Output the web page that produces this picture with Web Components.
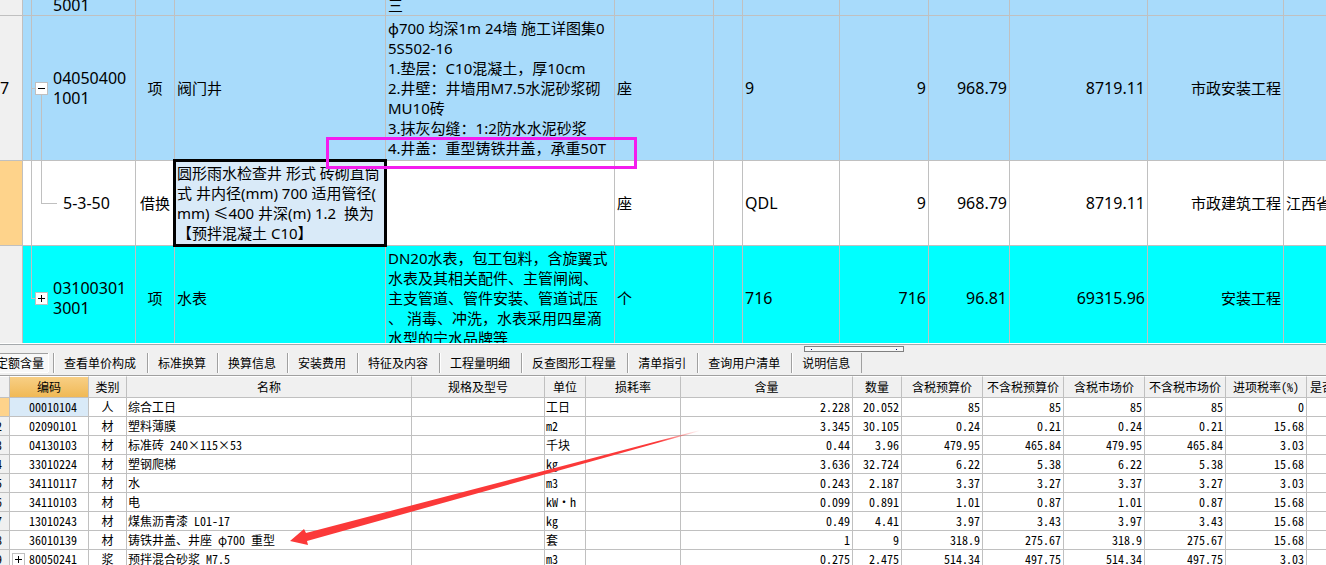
<!DOCTYPE html>
<html lang="zh-CN">
<head>
<meta charset="utf-8">
<title>工程量清单</title>
<style>
  html, body { margin: 0; height: 100%; overflow: hidden; background: #fff; }
</style>
</head>
<body>
<budget-app>
  <bill-sheet slot="bill"></bill-sheet>
  <detail-tabs slot="tabs"></detail-tabs>
  <resource-sheet slot="detail"></resource-sheet>
</budget-app>

<script>
const define = (name, html, setup) => {
  const template = document.createElement('template');
  template.innerHTML = html;
  customElements.define(name, class extends HTMLElement {
    constructor() {
      super();
      this.attachShadow({ mode: 'open' }).append(template.content.cloneNode(true));
    }
    connectedCallback() {
      if (setup && !this.ready) { this.ready = true; setup(this, this.shadowRoot); }
    }
  });
};

// Two stacked panes with the tab strip between them.
define('budget-app', `
<style>
  :host {
    display: grid;
    grid-template-rows: minmax(0, 49fr) auto minmax(0, 27fr);
    height: 100vh;
    color: #000;
    background: #fff;
  }
  ::slotted(*) { min-width: 0; }
</style>
<slot name="bill"></slot><slot name="tabs"></slot><slot name="detail"></slot>`);

// Plus / minus box of a tree row.
define('tree-toggle', `
<style>
  :host { display: block; flex: none; width: 13px; height: 13px; white-space: normal; }
  button {
    display: block; width: 13px; height: 13px; padding: 0; box-sizing: border-box;
    border: 1px solid #c0c0c0; border-radius: 0; background: #fff;
  }
  svg { display: block; }
  :host([open]) .v { display: none; }
</style>
<button type="button" aria-label="+/-">
  <svg width="11" height="11" viewBox="0 0 11 11" shape-rendering="crispEdges">
    <path d="M2 5h7v1H2z"/><path class="v" d="M5 2h1v7H5z"/>
  </svg>
</button>`);

// Frame that marks a passage of the bill.
define('mark-frame', `
<style>
  :host { display: block; box-sizing: border-box; border: 3px solid #f41cee; pointer-events: none; }
</style>`);

// Tapering arrow that fades at its tail.
define('mark-arrow', `
<style>:host { display: block; pointer-events: none; } svg { display: block; }</style>
<svg width="414" height="120" viewBox="0 0 414 120" aria-hidden="true">
  <defs>
    <linearGradient id="g" gradientUnits="userSpaceOnUse" x1="0" y1="0" x2="412" y2="0">
      <stop offset="0.9" stop-color="#fb3939"/>
      <stop offset="1" stop-color="#fb3939" stop-opacity="0"/>
    </linearGradient>
  </defs>
  <path fill="url(#g)" d="M2 112 L16 100 L18 104 L412 1 L412 2 L19 112 L20 116 Z"/>
</svg>`);

const billRows = [
  { kind: 'item last', no: '', tree: 'none', code: ['5001'], type: '', name: [], desc: ['三'], unit: '', expr: '', qty: '', price: '', total: '', spec: '', lib: '' },
  { kind: 'item', no: '7', tree: 'open', code: ['04050400', '1001'], type: '项', name: ['阀门井'],
    desc: ['φ700 均深1m 24墙 施工详图集0', '5S502-16', '1.垫层：C10混凝土，厚10cm', '2.井壁：井墙用M7.5水泥砂浆砌', 'MU10砖', '3.抹灰勾缝：1:2防水水泥砂浆', '4.井盖：重型铸铁井盖，承重50T'],
    unit: '座', expr: '9', qty: '9', price: '968.79', total: '8719.11', spec: '市政安装工程', lib: '' },
  { kind: 'quota', no: '', tree: 'leaf', code: ['5-3-50'], type: '借换',
    name: ['圆形雨水检查井 形式 砖砌直筒', '式 井内径(mm) 700 适用管径(', 'mm) ≤400 井深(m) 1.2  换为', '【预拌混凝土 C10】'],
    desc: [], unit: '座', expr: 'QDL', qty: '9', price: '968.79', total: '8719.11', spec: '市政建筑工程', lib: '江西省' },
  { kind: 'meter', no: '', tree: 'shut', code: ['03100301', '3001'], type: '项', name: ['水表'],
    desc: ['DN20水表，包工包料，含旋翼式', '水表及其相关配件、主管闸阀、', '主支管道、管件安装、管道试压', '、 消毒、冲洗，水表采用四星滴', '水型的宁水品牌等'],
    unit: '个', expr: '716', qty: '716', price: '96.81', total: '69315.96', spec: '安装工程', lib: '' },
];

define('bill-sheet', `
<style>
  :host {
    display: block; position: relative; z-index: 1; overflow: hidden;
    font: 15px/20px "Noto Sans", "Noto Sans CJK SC", sans-serif;
    --line: #c0c0c0;
  }
  table { width: 100%; table-layout: fixed; border-collapse: separate; border-spacing: 0; }
  td {
    box-sizing: border-box; padding: 0 2px; vertical-align: middle; white-space: pre;
    border-right: 1px solid var(--line); border-bottom: 1px solid var(--line); overflow: hidden;
  }
  td:last-child { border-right: 0; }
  tr.item td { background-color: #a8dbfb; }
  tr.meter td { background-color: #0ff; }
  tr.item { height: 145px; }
  tr.quota { height: 85px; }
  tr.meter { height: 105px; }
  tr.last { height: 16px; }
  tr.last td { vertical-align: bottom; }
  tr.last td div { height: 15px; display: flex; flex-direction: column; justify-content: flex-end; }
  tr td.no { padding: 0; background-color: #f0f0f0; }
  tr.quota td.no { background-color: #fed38b; }
  .num { font-size: 16px; }
  .c { text-align: center; }
  .r { text-align: right; }
  td.code { padding: 0; background-repeat: no-repeat; --g: linear-gradient(var(--line), var(--line)); }
  .code div { display: flex; align-items: center; gap: 5px; padding-left: 12px; }
  .none div { padding-left: 30px; align-items: flex-start; }
  .leaf div { padding-left: 40px; }
  .none { background-image: var(--g); background-size: 1px 100%; background-position: 8px 0; }
  .open {
    background-image: var(--g), var(--g), var(--g);
    background-size: 1px 100%, 4px 1px, 1px 50%;
    background-position: 8px 0, 8px 50%, 18px 100%;
  }
  .leaf {
    background-image: var(--g), var(--g), var(--g);
    background-size: 1px 100%, 1px 50%, 16px 1px;
    background-position: 8px 0, 18px 0, 18px 50%;
  }
  .shut {
    background-image: var(--g), var(--g);
    background-size: 1px 50%, 4px 1px;
    background-position: 8px 0, 8px 50%;
  }
  tr.quota td.name { position: relative; overflow: visible; background: #d9eaf8; }
  tr.quota td.name::after { content: ""; position: absolute; inset: -2px; border: 3px solid #000; }
  mark-frame { position: absolute; left: 326px; top: 137px; width: 311px; height: 32px; }
</style>
<table>
  <colgroup></colgroup>
  <tbody></tbody>
</table>
<mark-frame></mark-frame>`, (host, root) => {
  root.querySelector('colgroup').innerHTML =
    [23, 113, 39, 211, 229, 99, 29, 97, 89, 81, 138, 136].map(w => `<col style="width:${w}px">`).join('') + '<col>';
  const toggles = { open: '<tree-toggle open></tree-toggle>', shut: '<tree-toggle></tree-toggle>' };
  const cell = (cls, lines) => `<td class="${cls}"><div>${[].concat(lines).join('<br>')}</div></td>`;
  root.querySelector('tbody').innerHTML = billRows.map(r => `<tr class="${r.kind}">` +
    cell('no num', r.no) +
    `<td class="code num ${r.tree}"><div>${toggles[r.tree] || ''}<span>${r.code.join('<br>')}</span></div></td>` +
    cell('c', r.type) + cell('name', r.name) + cell('desc', r.desc) + cell('', r.unit) + cell('', '') +
    cell('num', r.expr) + cell('num r', r.qty) + cell('num r', r.price) + cell('num r', r.total) +
    cell('r', r.spec) + cell('', r.lib) + '</tr>').join('');
});

define('detail-tabs', `
<style>
  :host {
    display: block; background: #f0f0f0; border-top: 1px solid #fff;
    font: 12px/18px "Noto Sans Mono CJK SC", "Noto Sans CJK SC", sans-serif;
  }
  .bar { position: relative; height: 30px; border-top: 1px solid #a5a9ac; border-bottom: 1px solid #a0a0a0; overflow: hidden; }
  .grip {
    position: absolute; left: 804px; top: 1px; width: 100px; height: 6px; box-sizing: border-box;
    border: 1px solid #808080; background: #f7f7f7; display: flex; justify-content: space-between; align-items: center; padding: 0 6px;
  }
  .grip i { width: 1px; height: 1px; background: #000080; }
  nav { display: flex; padding-top: 8px; margin-left: -8px; }
  button {
    font: inherit; color: #000; white-space: nowrap; background: none; border: 0; border-radius: 0;
    border-left: 1px solid #a0a0a0; box-shadow: inset 1px 0 #fff; height: 20px; padding: 0 11px 0 10px; margin: 0;
  }
  button.on {
    height: 19px; padding: 0 4px; margin-right: 5px; border: 0; background: #f8f8f8;
    border-top: 1px solid #a0a0a0; box-shadow: 1px 0 #fff, 0 1px #fff;
  }
  .end { border-left: 1px solid #a0a0a0; height: 20px; }
</style>
<div class="bar"><div class="grip"><i></i><i></i></div><nav></nav></div>`, (host, root) => {
  root.querySelector('nav').innerHTML =
    ['定额含量', '查看单价构成', '标准换算', '换算信息', '安装费用', '特征及内容', '工程量明细', '反查图形工程量', '清单指引', '查询用户清单', '说明信息']
      .map((t, i) => `<button type="button"${i ? '' : ' class="on"'}>${t}</button>`).join('') + '<span class="end"></span>';
});

const heads = ['', '编码', '类别', '名称', '规格及型号', '单位', '损耗率', '含量', '数量', '含税预算价', '不含税预算价', '含税市场价', '不含税市场价', '进项税率(%)', '是否'];
const resources = [
  ['', '00010104', '人', '综合工日', '工日', '2.228', '20.052', '85', '85', '85', '85', '0'],
  ['2', '02090101', '材', '塑料薄膜', 'm2', '3.345', '30.105', '0.24', '0.21', '0.24', '0.21', '15.68'],
  ['3', '04130103', '材', '标准砖 240×115×53', '千块', '0.44', '3.96', '479.95', '465.84', '479.95', '465.84', '3.03'],
  ['4', '33010224', '材', '塑钢爬梯', 'kg', '3.636', '32.724', '6.22', '5.38', '6.22', '5.38', '15.68'],
  ['5', '34110117', '材', '水', 'm3', '0.243', '2.187', '3.37', '3.27', '3.37', '3.27', '3.03'],
  ['6', '34110103', '材', '电', 'kW·h', '0.099', '0.891', '1.01', '0.87', '1.01', '0.87', '15.68'],
  ['7', '13010243', '材', '煤焦沥青漆 L01-17', 'kg', '0.49', '4.41', '3.97', '3.43', '3.97', '3.43', '15.68'],
  ['8', '36010139', '材', '铸铁井盖、井座 φ700 重型', '套', '1', '9', '318.9', '275.67', '318.9', '275.67', '15.68'],
  ['9', '80050241', '浆', '预拌混合砂浆 M7.5', 'm3', '0.275', '2.475', '514.34', '497.75', '514.34', '497.75', '3.03'],
];

define('resource-sheet', `
<style>
  :host {
    display: block; position: relative; overflow: hidden;
    font: 12px/18px "Noto Sans Mono CJK SC", "Noto Sans CJK SC", sans-serif;
  }
  table { width: 100%; table-layout: fixed; border-collapse: separate; border-spacing: 0; }
  th, td {
    box-sizing: border-box; height: 19px; padding: 0 2px 0 1px; white-space: pre; overflow: hidden;
    border-right: 1px solid #c0c0c0; border-bottom: 1px solid #c0c0c0; text-align: left;
  }
  th:last-child, td:last-child { border-right: 0; }
  th { height: 22px; padding: 0; font-weight: normal; text-align: center; background: #f0f0f0; border-top: 1px solid #fff; }
  th:last-child { text-align: left; padding-left: 3px; }
  th.on { background: linear-gradient(#f8cf85, #f0b956); }
  td.no { background: #f0f0f0; padding: 0 7px 0 0; }
  td.no div { display: flex; justify-content: flex-end; }
  tr.on td.no { background: #fed38b; }
  tr.on td.code { background: #d9eaf8; }
  td.code { padding: 0; }
  .code div { display: flex; align-items: center; gap: 4px; padding-left: 2px; }
  .code div > span:first-child { padding-left: 17px; }
  td.c { text-align: center; padding: 0 2px; }
  td.r { text-align: right; }
  mark-arrow { position: absolute; left: 288px; top: 53px; }
</style>
<table>
  <colgroup></colgroup>
  <thead><tr></tr></thead>
  <tbody></tbody>
</table>
<mark-arrow></mark-arrow>`, (host, root) => {
  root.querySelector('colgroup').innerHTML =
    [10, 79, 38, 285, 133, 41, 95, 172, 49, 81, 81, 81, 81, 81].map(w => `<col style="width:${w}px">`).join('') + '<col>';
  root.querySelector('thead tr').innerHTML = heads.map(h => `<th${h === '编码' ? ' class="on"' : ''}>${h}</th>`).join('');
  root.querySelector('tbody').innerHTML = resources.map(([no, code, kind, name, unit, ...nums], i) => {
    const r = v => `<td class="r">${v}</td>`;
    return `<tr${i ? '' : ' class="on"'}><td class="no"><div>${no}</div></td>` +
      `<td class="code"><div>${no === '9' ? '<tree-toggle></tree-toggle>' : ''}<span>${code}</span></div></td>` +
      `<td class="c">${kind}</td><td>${name}</td><td></td><td>${unit}</td><td></td>` + nums.map(r).join('') + '<td></td></tr>';
  }).join('');
});
</script>
</body>
</html>
